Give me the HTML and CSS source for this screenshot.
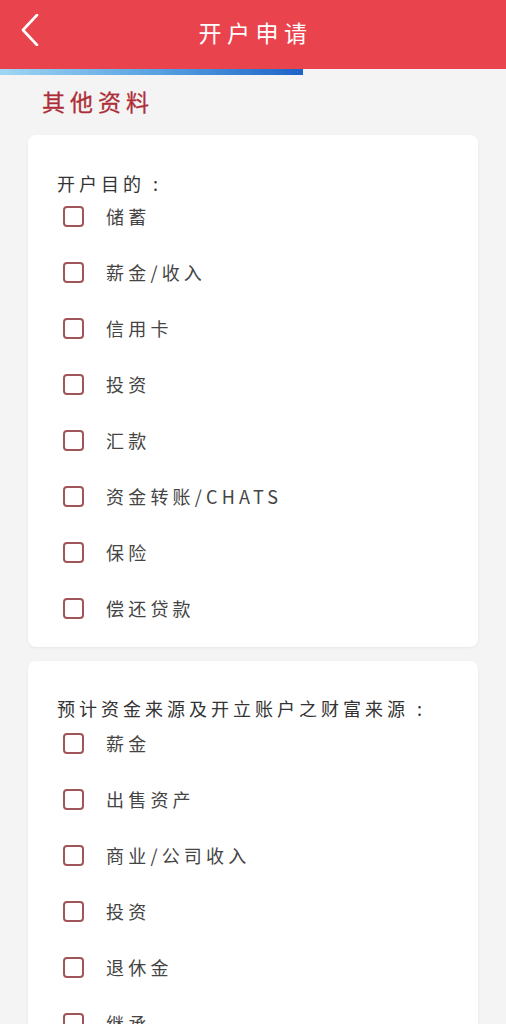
FILE: index.html
```html
<!DOCTYPE html>
<html lang="zh-CN">
<head>
<meta charset="utf-8">
<title>开户申请</title>
<link rel="stylesheet" href="styles.css">
</head>
<body>
<header class="topbar">
  <span class="back">
    <svg width="20" height="32" viewBox="0 0 20 32"><path d="M17 1 L3 16 L17 31" fill="none" stroke="#fff" stroke-width="2.6" stroke-linecap="round" stroke-linejoin="round"/></svg>
  </span>
  <h1 class="title">开户申请</h1>
</header>
<div class="progress"><div class="progress-fill"></div></div>
<h2 class="section-title">其他资料</h2>
<section class="card card-first">
  <div class="label">开户目的 :</div>
  <ul class="options">
    <li class="option"><span class="box"></span><span class="text">储蓄</span></li>
    <li class="option"><span class="box"></span><span class="text">薪金/收入</span></li>
    <li class="option"><span class="box"></span><span class="text">信用卡</span></li>
    <li class="option"><span class="box"></span><span class="text">投资</span></li>
    <li class="option"><span class="box"></span><span class="text">汇款</span></li>
    <li class="option"><span class="box"></span><span class="text">资金转账/CHATS</span></li>
    <li class="option"><span class="box"></span><span class="text">保险</span></li>
    <li class="option"><span class="box"></span><span class="text">偿还贷款</span></li>
  </ul>
</section>
<section class="card card-second">
  <div class="label">预计资金来源及开立账户之财富来源 :</div>
  <ul class="options">
    <li class="option"><span class="box"></span><span class="text">薪金</span></li>
    <li class="option"><span class="box"></span><span class="text">出售资产</span></li>
    <li class="option"><span class="box"></span><span class="text">商业/公司收入</span></li>
    <li class="option"><span class="box"></span><span class="text">投资</span></li>
    <li class="option"><span class="box"></span><span class="text">退休金</span></li>
    <li class="option"><span class="box"></span><span class="text">继承</span></li>
    <li class="option"><span class="box"></span><span class="text">其他</span></li>
  </ul>
</section>
</body>
</html>
```
FILE: styles.css
```css
html, body {
  margin: 0;
  padding: 0;
  background: #f4f4f4;
  font-family: "Noto Sans CJK SC", "Noto Sans", sans-serif;
}
.topbar {
  height: 69px;
  background: #e9434d;
  display: flex;
  align-items: center;
  justify-content: center;
  padding-bottom: 6px;
  box-sizing: border-box;
  position: relative;
}
.back {
  position: absolute;
  left: 20px;
  top: 14px;
  display: flex;
}
.title {
  margin: 0;
  color: #fff;
  font-size: 23px;
  font-weight: 400;
  letter-spacing: 5.5px;
  padding-left: 5px;
}
.progress {
  height: 6px;
  background: #f4f4f4;
}
.progress-fill {
  width: 303px;
  height: 6px;
  background: linear-gradient(90deg, #9fd6f2 0%, #5aa3e2 50%, #1e63c8 100%);
}
.section-title {
  margin: 0;
  height: 60px;
  padding-left: 42px;
  padding-bottom: 8px;
  display: flex;
  align-items: center;
  box-sizing: border-box;
  font-size: 23px;
  font-weight: 400;
  letter-spacing: 5px;
  color: #ad2e38;
  -webkit-text-stroke: 0.3px #ad2e38;
}
.card {
  margin: 0 28px 14px;
  background: #fff;
  border-radius: 8px;
  box-shadow: 0 1px 3px rgba(0, 0, 0, 0.06);
  padding: 36px 20px 19px 29px;
}
.card-second {
  padding-top: 35px;
}
.label {
  height: 24px;
  line-height: 24px;
  font-size: 18px;
  letter-spacing: 4px;
  color: #333;
  white-space: nowrap;
}
.card-second .label {
  margin-bottom: 3px;
}
.options {
  list-style: none;
  margin: 1px 0 0;
  padding: 0;
  display: flex;
  flex-direction: column;
  gap: 16px;
}
.option {
  height: 40px;
  display: flex;
  align-items: center;
}
.box {
  width: 17px;
  height: 17px;
  border: 2px solid #a0555b;
  border-radius: 4px;
  margin-left: 6px;
  margin-right: 22px;
  flex: none;
}
.text {
  font-size: 18px;
  letter-spacing: 4.2px;
  color: #444;
}
```
